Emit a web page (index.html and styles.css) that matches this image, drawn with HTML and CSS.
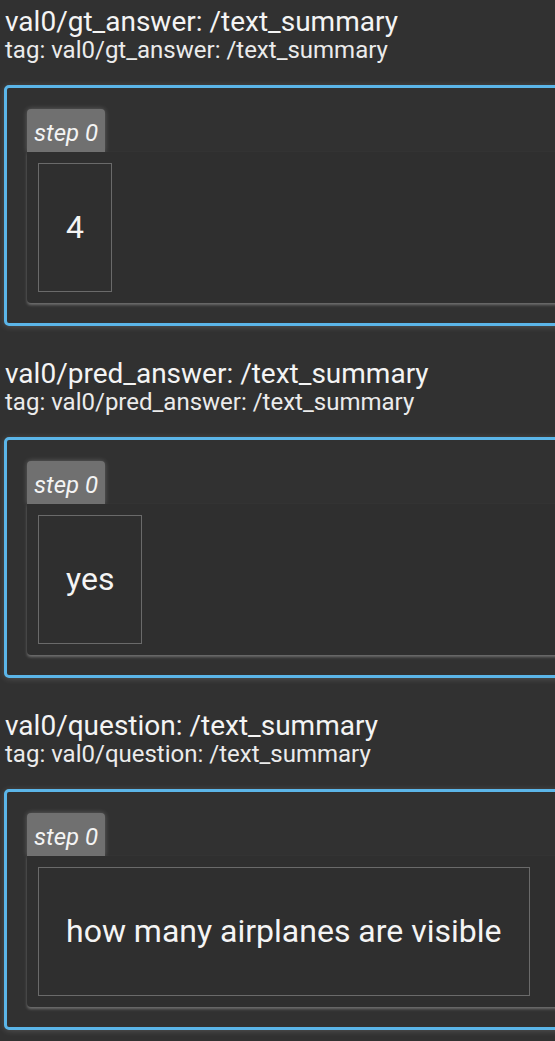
FILE: index.html
```html
<!DOCTYPE html>
<html lang="en">
<head>
<meta charset="utf-8">
<title>Text summaries</title>
<link rel="stylesheet" href="styles.css">
</head>
<body>
<main class="page">
  <section class="summary">
    <div class="title">val0/gt_answer: /text_summary</div>
    <div class="tag">tag: val0/gt_answer: /text_summary</div>
    <div class="card">
      <div class="tab">step 0</div>
      <div class="panel">
        <table class="cells"><tr><td>4</td></tr></table>
      </div>
    </div>
  </section>
  <section class="summary">
    <div class="title">val0/pred_answer: /text_summary</div>
    <div class="tag">tag: val0/pred_answer: /text_summary</div>
    <div class="card">
      <div class="tab">step 0</div>
      <div class="panel">
        <table class="cells"><tr><td>yes</td></tr></table>
      </div>
    </div>
  </section>
  <section class="summary">
    <div class="title">val0/question: /text_summary</div>
    <div class="tag">tag: val0/question: /text_summary</div>
    <div class="card">
      <div class="tab">step 0</div>
      <div class="panel">
        <table class="cells"><tr><td>how many airplanes are visible</td></tr></table>
      </div>
    </div>
  </section>
</main>
</body>
</html>
```

FILE: styles.css
```css
html, body {
  margin: 0;
  padding: 0;
  background: #313131;
  overflow: hidden;
}
body {
  font-family: Roboto, "Liberation Sans", sans-serif;
  color: #eeeeee;
}
.page {
  display: flex;
  flex-direction: column;
  padding-left: 4px;
}
.summary {
  padding: 6px 0 26px 0;
}
.title {
  font-size: 28px;
  line-height: 31px;
  margin-left: 1px;
  color: #f4f4f4;
  white-space: nowrap;
}
.tag {
  font-size: 24px;
  line-height: 26px;
  margin-left: 1px;
  color: #ebebeb;
  white-space: nowrap;
}
.card {
  margin-top: 22px;
  width: 700px;
  height: 241px;
  box-sizing: border-box;
  border: 3px solid #5bb5e8;
  border-radius: 5px;
  padding: 21px 0 20px 20px;
  box-shadow: 0 1px 6px rgba(255, 255, 255, 0.16);
  display: flex;
  flex-direction: column;
  align-items: flex-start;
}
.tab {
  height: 43px;
  box-sizing: border-box;
  padding: 6px 7px 0 7px;
  line-height: 37px;
  background: #707070;
  color: #f4f4f4;
  font-size: 24px;
  font-style: italic;
  border-radius: 4px 4px 0 0;
  box-shadow: 0 0 5px rgba(255, 255, 255, 0.25);
}
.panel {
  align-self: stretch;
  height: 151px;
  box-sizing: border-box;
  padding: 11px;
  background: #2f2f2f;
  border-radius: 0 0 4px 4px;
  box-shadow: 0 2px 3px rgba(255, 255, 255, 0.3);
}
.cells {
  border-collapse: collapse;
}
.cells td {
  border: 1px solid #6a6a6a;
  padding: 45px 27px;
  font-size: 32px;
  line-height: 37px;
  color: #f4f4f4;
  white-space: nowrap;
}
```
